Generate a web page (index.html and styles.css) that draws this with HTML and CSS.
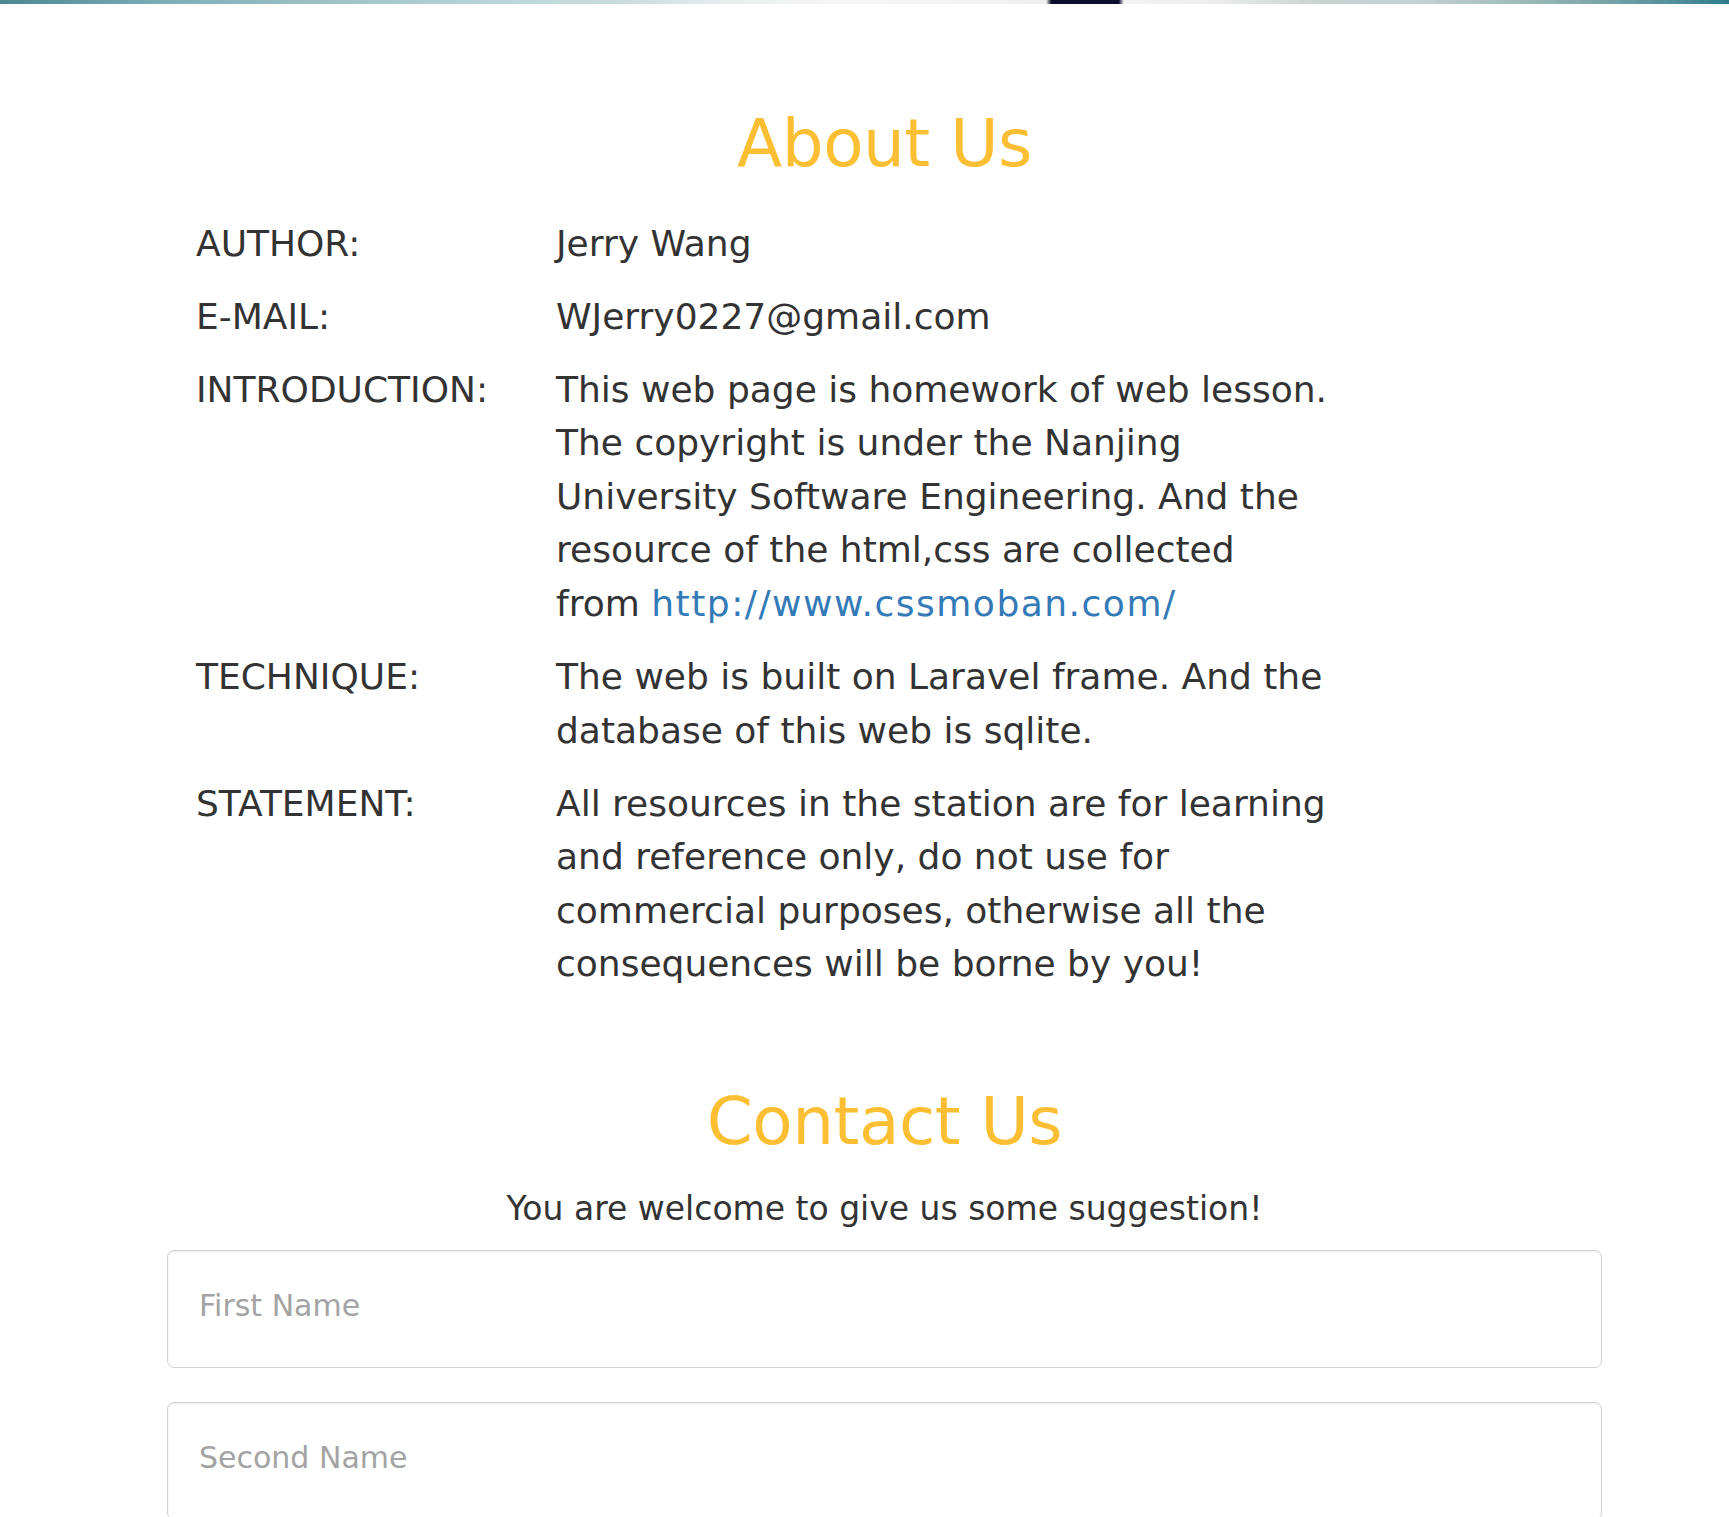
FILE: index.html
```html
<!DOCTYPE html>
<html lang="en">
<head>
<meta charset="utf-8">
<title>About Us</title>
<link rel="stylesheet" href="styles.css">
</head>
<body>
<div class="top-strip"></div>
<main class="container">
  <section class="about">
    <h2 class="section-title about-title">About Us</h2>
    <div class="info">
      <div class="info-row">
        <div class="label">AUTHOR:</div>
        <div class="value">Jerry Wang</div>
      </div>
      <div class="info-row">
        <div class="label">E-MAIL:</div>
        <div class="value">WJerry0227@gmail.com</div>
      </div>
      <div class="info-row">
        <div class="label">INTRODUCTION:</div>
        <div class="value">This web page is homework of web lesson.<br>The copyright is under the Nanjing<br>University Software Engineering. And the<br>resource of the html,css are collected<br>from <a class="link" href="#">http://www.cssmoban.com/</a></div>
      </div>
      <div class="info-row">
        <div class="label">TECHNIQUE:</div>
        <div class="value">The web is built on Laravel frame. And the<br>database of this web is sqlite.</div>
      </div>
      <div class="info-row">
        <div class="label">STATEMENT:</div>
        <div class="value">All resources in the station are for learning<br>and reference only, do not use for<br>commercial purposes, otherwise all the<br>consequences will be borne by you!</div>
      </div>
    </div>
  </section>
  <section class="contact">
    <h2 class="section-title contact-title">Contact Us</h2>
    <p class="subtitle">You are welcome to give us some suggestion!</p>
    <form class="contact-form">
      <input class="form-control" type="text" placeholder="First Name">
      <input class="form-control" type="text" placeholder="Second Name">
    </form>
  </section>
</main>
</body>
</html>
```

FILE: styles.css
```css
html, body {
  margin: 0;
  padding: 0;
  background: #ffffff;
}

body {
  font-family: "DejaVu Sans", "Liberation Sans", sans-serif;
  color: #333333;
  overflow: hidden;
}

.top-strip {
  height: 4px;
  background: linear-gradient(to right,
    #4b8791 0%,
    #7fb0b7 10%,
    #a6c8cc 22%,
    #bcd8dc 30%,
    #c9dcdc 36%,
    #e6eeee 42%,
    #f6f6f4 48%,
    #f4f4f2 56%,
    #eeeeec 60.5%,
    #0a0f2e 60.8%,
    #0a0f2e 64.7%,
    #f2f2f0 65%,
    #eeeeec 70%,
    #c8d4d0 76%,
    #c4d2d6 82%,
    #9dbab8 88%,
    #6e9ea4 94%,
    #2f7b8c 100%);
}

.container {
  width: 1435px;
  margin-left: 167px;
}

.section-title {
  margin: 0;
  font-weight: normal;
  font-size: 66px;
  line-height: 72.6px;
  letter-spacing: -0.5px;
  color: #fcbf33;
  text-align: center;
}

.about-title {
  margin-top: 104px;
}

.info {
  margin-top: 36px;
  padding-left: 29px;
  display: flex;
  flex-direction: column;
  gap: 19.4px;
}

.info-row {
  display: grid;
  grid-template-columns: 360px 1fr;
  font-size: 36px;
  line-height: 53.6px;
}

.label,
.value {
  white-space: nowrap;
}

.link {
  color: #337ab7;
  text-decoration: none;
  letter-spacing: 1.5px;
}

.contact-title {
  margin-top: 95.6px;
}

.subtitle {
  margin: 27px 0 0;
  font-size: 33px;
  line-height: 46.2px;
  text-align: center;
}

.contact-form {
  margin-top: 18px;
  display: flex;
  flex-direction: column;
  gap: 34px;
}

.form-control {
  display: block;
  box-sizing: border-box;
  width: 100%;
  height: 118px;
  margin: 0;
  padding: 0 31px 7px;
  border: 1.5px solid #d3d3d3;
  border-radius: 7px;
  box-shadow: inset 0 1px 2px rgba(0, 0, 0, 0.08);
  background: #ffffff;
  font-family: "DejaVu Sans", "Liberation Sans", sans-serif;
  font-size: 30px;
  color: #555555;
  outline: none;
}

.form-control::placeholder {
  color: #a3a3a3;
}
```
